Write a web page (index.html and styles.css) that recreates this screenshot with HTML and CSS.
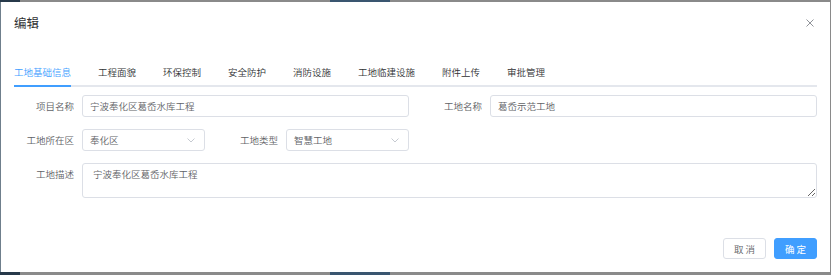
FILE: index.html
```html
<!DOCTYPE html>
<html>
<head>
  <meta charset="utf-8">
  <link rel="stylesheet" href="styles.css">
</head>

<body>
  <div class="overlay">
    <div class="dialog">
      <div class="dialog-header">
        <span class="dialog-title">编辑</span>
        <button class="dialog-close" aria-label="关闭">
          <svg width="8" height="8" viewBox="0 0 8 8"><path d="M0.5 0.5L7.5 7.5M7.5 0.5L0.5 7.5" stroke="#909399" stroke-width="1" fill="none"/></svg>
        </button>
      </div>

      <div class="dialog-body">
        <!-- Tab header -->
        <div class="tabs">
          <div class="tab active">工地基础信息</div>
          <div class="tab">工程面貌</div>
          <div class="tab">环保控制</div>
          <div class="tab">安全防护</div>
          <div class="tab">消防设施</div>
          <div class="tab">工地临建设施</div>
          <div class="tab">附件上传</div>
          <div class="tab">审批管理</div>
        </div>

        <!-- Basic info form, four columns -->
        <form class="form">
          <div class="form-item span-2">
            <label class="form-label">项目名称</label>
            <input class="input" type="text" value="宁波奉化区葛岙水库工程">
          </div>
          <div class="form-item span-2">
            <label class="form-label">工地名称</label>
            <input class="input" type="text" value="葛岙示范工地">
          </div>

          <div class="form-item">
            <label class="form-label">工地所在区</label>
            <div class="select">
              <span>奉化区</span>
              <svg width="8" height="5" viewBox="0 0 8 5"><path d="M0.5 0.5L4 4L7.5 0.5" stroke="#c0c4cc" stroke-width="0.9" fill="none"/></svg>
            </div>
          </div>
          <div class="form-item">
            <label class="form-label">工地类型</label>
            <div class="select">
              <span>智慧工地</span>
              <svg width="8" height="5" viewBox="0 0 8 5"><path d="M0.5 0.5L4 4L7.5 0.5" stroke="#c0c4cc" stroke-width="0.9" fill="none"/></svg>
            </div>
          </div>

          <div class="form-item span-4 top">
            <label class="form-label">工地描述</label>
            <textarea class="textarea">宁波奉化区葛岙水库工程</textarea>
          </div>
        </form>
      </div>

      <div class="dialog-footer">
        <button class="btn">取 消</button>
        <button class="btn btn-primary">确 定</button>
      </div>
    </div>
  </div>
</body>
</html>
```

FILE: styles.css
```css
* {
  box-sizing: border-box;
}

html, body {
  margin: 0;
  height: 100%;
}

body {
  font-family: "Noto Sans CJK SC", "Noto Sans", sans-serif;
  font-size: 9.5px;
  font-weight: 350;
  color: #606266;
  background: linear-gradient(to right, #27394a 0, #27394a 20px, #8a8a8a 20px, #8a8a8a 330px, #3a5670 330px, #3a5670 390px, #8a8a8a 390px);
}

.overlay {
  height: 100%;
  padding: 2px 1px 3px 1px;
  display: flex;
}

.dialog {
  flex: 1;
  background: #fff;
  display: flex;
  flex-direction: column;
  box-shadow: -1px 0 0 #6f7f8c;
}

.dialog-header {
  display: flex;
  justify-content: space-between;
  align-items: center;
  padding: 12px 16px 8px 13px;
  height: 38px;
}

.dialog-title {
  font-size: 12.5px;
  font-weight: 400;
  line-height: 16px;
  color: #303133;
}

.dialog-close {
  border: none;
  background: none;
  padding: 0;
  width: 8px;
  height: 8px;
  display: flex;
  cursor: pointer;
}

.dialog-body {
  padding: 20px 13px 0 13px;
  flex: 1;
}

/* Tabs */
.tabs {
  display: flex;
  height: 27px;
  border-bottom: 2px solid #e4e7ed;
  margin-bottom: 8px;
}

.tab {
  padding: 0 13.5px;
  line-height: 25px;
  color: #303133;
  position: relative;
  white-space: nowrap;
}

.tab:first-child {
  padding-left: 0;
}

.tab:last-child {
  padding-right: 0;
}

.tab.active {
  color: #409eff;
}

.tab.active:after {
  content: '';
  position: absolute;
  left: 0;
  right: 13.5px;
  bottom: -2px;
  height: 2px;
  background: #409eff;
}

/* Form grid */
.form {
  display: grid;
  grid-template-columns: repeat(4, 1fr);
  column-gap: 13px;
  row-gap: 12px;
}

.form-item {
  display: flex;
  align-items: center;
}

.form-item.top {
  align-items: flex-start;
}

.span-2 {
  grid-column: span 2;
}

.span-4 {
  grid-column: span 4;
}

.form-label {
  width: 68px;
  flex: none;
  text-align: right;
  padding-right: 8px;
  line-height: 22px;
  color: #606266;
  white-space: nowrap;
}

.input, .select, .textarea {
  flex: 1;
  min-width: 0;
  border: 1px solid #dcdfe6;
  border-radius: 3px;
  font-family: inherit;
  font-size: 9.5px;
  font-weight: 350;
  color: #606266;
  background: #fff;
}

.input {
  height: 22px;
  padding: 0 7px;
  outline: none;
}

.select {
  height: 22px;
  padding: 0 9px 0 7px;
  display: flex;
  align-items: center;
  justify-content: space-between;
}

.textarea {
  height: 35px;
  padding: 3px 10px;
  line-height: 14px;
  outline: none;
  resize: vertical;
}

/* Footer buttons */
.dialog-footer {
  display: flex;
  justify-content: flex-end;
  gap: 8px;
  padding: 0 13px 13px 0;
}

.btn {
  width: 43px;
  height: 21px;
  border: 1px solid #dcdfe6;
  border-radius: 3px;
  background: #fff;
  color: #606266;
  font-family: inherit;
  font-size: 9.5px;
  font-weight: 350;
  padding: 0;
  cursor: pointer;
}

.btn-primary {
  background: #409eff;
  border-color: #409eff;
  color: #fff;
  font-weight: 400;
}
```
